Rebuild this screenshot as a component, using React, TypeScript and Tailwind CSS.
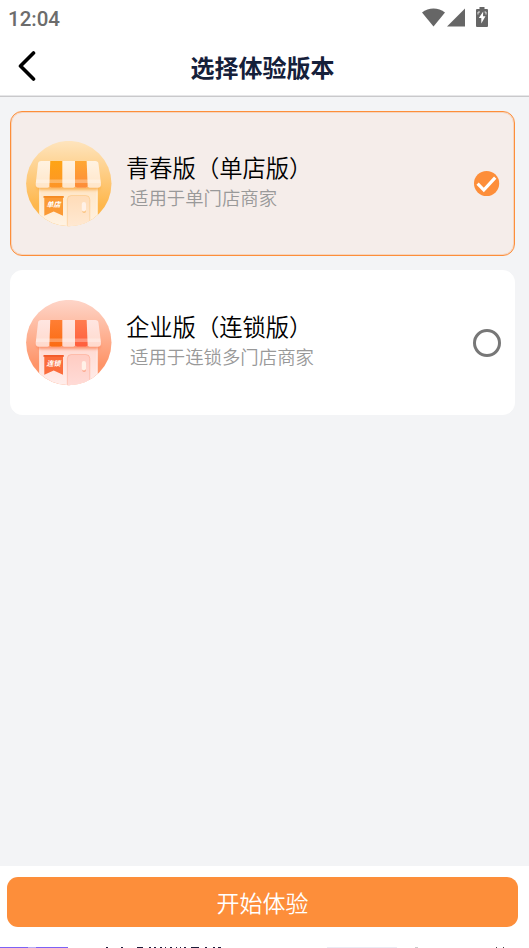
import { useState } from "react";

type Theme = {
  skyTop: string;
  skyBottom: string;
  stripeA: [string, string];
  stripeB: [string, string];
  awning: [string, string];
  wall: [string, string];
  door: [string, string];
  flag: string;
  flagBar: string;
  shadow: string;
};

type Plan = {
  id: string;
  title: string;
  desc: string;
  badge: string;
  theme: Theme;
};

const PLANS: Plan[] = [
  {
    id: "single",
    title: "青春版（单店版）",
    desc: "适用于单门店商家",
    badge: "单店",
    theme: {
      skyTop: "#fee4bd",
      skyBottom: "#feb74c",
      stripeA: ["#ffa514", "#fd9428"],
      stripeB: ["#ffa832", "#fd8a3a"],
      awning: ["#fff3e2", "#ffe5c8"],
      wall: ["#ffe3c0", "#fff3e4"],
      door: ["#ffdcb8", "#ffe9d3"],
      flag: "#fb9a35",
      flagBar: "#f58a22",
      shadow: "#f9a63a",
    },
  },
  {
    id: "chain",
    title: "企业版（连锁版）",
    desc: "适用于连锁多门店商家",
    badge: "连锁",
    theme: {
      skyTop: "#fed5c8",
      skyBottom: "#fe9468",
      stripeA: ["#ff7f35", "#fb6a10"],
      stripeB: ["#ff7d50", "#ff5c3c"],
      awning: ["#ffe6e2", "#ffd9cc"],
      wall: ["#ffd6cc", "#ffeeec"],
      door: ["#ffccc2", "#ffdcd8"],
      flag: "#fb6d3c",
      flagBar: "#f25a2a",
      shadow: "#fb7d50",
    },
  },
];

function StoreIcon({ id, theme, badge }: { id: string; theme: Theme; badge: string }) {
  const g = (name: string) => `${id}-${name}`;
  const fill = (name: string) => `url(#${g(name)})`;
  const gradients: [string, string, string][] = [
    ["sky", theme.skyTop, theme.skyBottom],
    ["a", theme.stripeA[0], theme.stripeA[1]],
    ["b", theme.stripeB[0], theme.stripeB[1]],
    ["awning", theme.awning[0], theme.awning[1]],
    ["wall", theme.wall[0], theme.wall[1]],
    ["door", theme.door[0], theme.door[1]],
  ];

  return (
    <svg viewBox="0 0 86 86" className="size-[86px] shrink-0" aria-hidden>
      <defs>
        {gradients.map(([name, from, to]) => (
          <linearGradient key={name} id={g(name)} x1="0" y1="0" x2="0" y2="1">
            <stop offset="0" stopColor={from} />
            <stop offset={name === "sky" ? "0.75" : "1"} stopColor={to} />
          </linearGradient>
        ))}
        <clipPath id={g("circle")}>
          <circle cx="42.8" cy="42.6" r="42.7" />
        </clipPath>
        <clipPath id={g("roof")}>
          <path d="M15.500 20H69.200c2 0 3.100 1 3.300 2.800L75 43c.2 2.400-1 3.800-3.200 3.800H65c-1.800 0-3-.5-3.300-1.300-.3.800-1.500 1.300-3.300 1.300h-6c-1.800 0-3-.5-3.300-1.300-.3.800-1.500 1.300-3.300 1.300h-6.200c-1.800 0-3-.5-3.300-1.300-.3.800-1.500 1.300-3.300 1.300h-6.200c-1.800 0-3-.5-3.300-1.300-.3.800-1.500 1.300-3.300 1.300h-7.300c-2.200 0-3.400-1.400-3.200-3.800l2.300-20.200c.2-1.800 1.300-2.800 3.200-2.800z" />
        </clipPath>
        <filter id={g("soft")} x="-20%" y="-50%" width="140%" height="200%">
          <feGaussianBlur stdDeviation="1.5" />
        </filter>
      </defs>
      <g clipPath={fill("circle")}>
        <rect width="86" height="86" fill={fill("sky")} />
        <rect x="13.500" y="40" width="58" height="46" fill={fill("wall")} />
        <path d="M13.700 46v40M71.200 46v40" stroke="#fff" strokeOpacity="0.6" />
        <rect x="11" y="43" width="63" height="6" rx="3" fill={theme.shadow} opacity="0.75" filter={fill("soft")} />
        <path
          d="M41.300 87V58.500a4 4 0 0 1 4-4h14.500a4 4 0 0 1 4 4V87"
          fill={fill("door")}
          stroke={theme.shadow}
          strokeOpacity="0.35"
          strokeWidth="0.8"
        />
        <rect x="56.200" y="63" width="3.800" height="9" rx="1.900" fill={theme.shadow} opacity="0.5" />
        <rect x="55.800" y="61" width="4.200" height="9.600" rx="2.100" fill="#fff1e8" />
        <path d="M18.300 55.500H37v19.200l-9.300-4.200-9.400 4.200z" fill={theme.flag} />
        <rect x="17.300" y="55" width="20.700" height="1.800" rx="0.900" fill={theme.flagBar} />
        <text
          x="27.500"
          y="66.300"
          textAnchor="middle"
          fontSize="7"
          fontWeight="700"
          fontStyle="italic"
          fill="#fff"
          fontFamily="'Noto Sans CJK SC', sans-serif"
        >
          {badge}
        </text>
        <g clipPath={fill("roof")}>
          <rect x="9" y="19" width="67" height="29" fill={fill("awning")} />
          <path d="M24.300 19h12v29H23.300z" fill={fill("a")} />
          <path d="M49 19h11.600l1.200 29H49z" fill={fill("b")} />
          <rect x="9" y="38.500" width="67" height="3.500" fill="#fff" opacity="0.3" />
        </g>
      </g>
    </svg>
  );
}

function StatusBar() {
  return (
    <div className="flex h-[37px] shrink-0 items-center justify-between pl-2 pr-[41px] text-[#666]">
      <span className="font-[Roboto,sans-serif] text-[20.5px] leading-6 font-medium text-[#6c6c6c]">12:04</span>
      <div className="flex items-center pb-[3px]">
        <svg viewBox="0 0 23 19" className="h-[19px] w-[23px]" fill="currentColor" aria-hidden>
          <path d="M0 4.500C6.500-1 16.500-1 23 4.500L11.500 18.600z" />
        </svg>
        <svg viewBox="0 0 18 19" className="ml-[2px] h-[19px] w-[18px]" fill="currentColor" aria-hidden>
          <path d="M18 .5v18H0z" />
        </svg>
        <svg viewBox="0 0 12 20" className="ml-[11px] h-[20px] w-[12px]" aria-hidden>
          <path d="M3.500 0h5v2H11q1 0 1 1v16q0 1-1 1H1q-1 0-1-1V3q0-1 1-1h2.500z" fill="currentColor" />
          <path d="M7.200 4.500 2.800 11h2.500v5.500L9.500 9.300H7z" fill="#fff" />
          <path d="M2 7.500V5h2M10 7.500V5H8.500" fill="none" stroke="#fff" strokeWidth="0.8" />
        </svg>
      </div>
    </div>
  );
}

function Radio({ checked }: { checked: boolean }) {
  if (checked) {
    return (
      <svg viewBox="0 0 28 28" className="size-7 shrink-0" aria-hidden>
        <circle cx="13.600" cy="13.500" r="12.600" fill="#fd8e3a" />
        <path d="m4.600 13.700 6.200 6.300L22.200 7.600" fill="none" stroke="#fff" strokeWidth="3.200" />
      </svg>
    );
  }
  return <span className="size-7 shrink-0 rounded-full border-3 border-[#777]" />;
}

// Sliver of the page that lies under the footer.
function PeekStrip() {
  return (
    <svg viewBox="0 0 529 1" className="h-px w-full shrink-0" shapeRendering="crispEdges" aria-hidden>
      <path d="M0 0h68v1H0z" fill="#7c63f5" />
      <path d="M28 0h8v1h-8z" fill="#b9adf8" />
      <path
        d="M106 0h2v1h-2zM121 0h2v1h-2zM137 0h6v1h-6zM149 0h2v1h-2zM154 0h2v1h-2zM160 0h2v1h-2zM165 0h1v1h-1zM170 0h2v1h-2zM176 0h1v1h-1zM180 0h1v1h-1zM184 0h2v1h-2zM191 0h8v1h-8zM205 0h2v1h-2zM213 0h2v1h-2zM218 0h3v1h-3z"
        fill="#1c1c3a"
      />
      <path d="M327 0h70v1h-70z" fill="#ebebf3" />
      <path d="M415 0h3v1h-3z" fill="#ccc" />
      <path d="M496 0h1v1h-1zM503 0h1v1h-1z" fill="#444" />
    </svg>
  );
}

export default function App() {
  const [selected, setSelected] = useState("single");

  return (
    <div className="flex h-screen w-full flex-col overflow-hidden bg-white font-['Noto_Sans_CJK_SC',sans-serif]">
      <StatusBar />

      <header className="grid h-[60px] shrink-0 grid-cols-[54px_1fr_58px] items-center border-b border-[#c9c9cb] bg-white shadow-[inset_0_-1px_0_#e6e6e8]">
        <button type="button" aria-label="返回" className="flex justify-center pb-[2px]">
          <svg viewBox="0 0 18 30" className="h-[30px] w-[18px]" aria-hidden>
            <path d="M15.500 2 2.500 15l13 13" fill="none" stroke="#000" strokeWidth="3.600" strokeLinecap="round" strokeLinejoin="round" />
          </svg>
        </button>
        <h1 className="text-center text-[24px] leading-8 font-bold text-[#15203a]">选择体验版本</h1>
      </header>

      <main className="flex flex-1 flex-col gap-[14px] bg-[#f3f4f6] pt-[14px] pr-[14px] pl-[10px]">
        {PLANS.map((plan) => {
          const active = plan.id === selected;
          return (
            <button
              key={plan.id}
              type="button"
              onClick={() => setSelected(plan.id)}
              className={`flex h-[145px] items-center rounded-xl border pr-[13px] pl-[15px] text-left ${active ? "border-[#fd8e3a] bg-[#f5edea] shadow-[inset_0_0_0_1px_rgba(253,142,58,0.25)]" : "border-white bg-white"}`}
            >
              <StoreIcon id={plan.id} theme={plan.theme} badge={plan.badge} />
              <span className="flex flex-1 flex-col pb-[3px] pl-[14px]">
                <span className="text-[23.3px] leading-[30px] font-[350] text-black">{plan.title}</span>
                <span className="pl-1 text-[18.4px] leading-[30px] font-[350] text-[#999]">{plan.desc}</span>
              </span>
              <Radio checked={active} />
            </button>
          );
        })}
      </main>

      <footer className="flex h-[81px] shrink-0 flex-col bg-white pt-[11px] pr-[11px] pl-[7px]">
        <button
          type="button"
          className="h-[50px] rounded-[11px] bg-[#fd8e3a] text-[23px] leading-[50px] font-[350] text-white"
        >
          开始体验
        </button>
      </footer>
      <PeekStrip />
    </div>
  );
}
